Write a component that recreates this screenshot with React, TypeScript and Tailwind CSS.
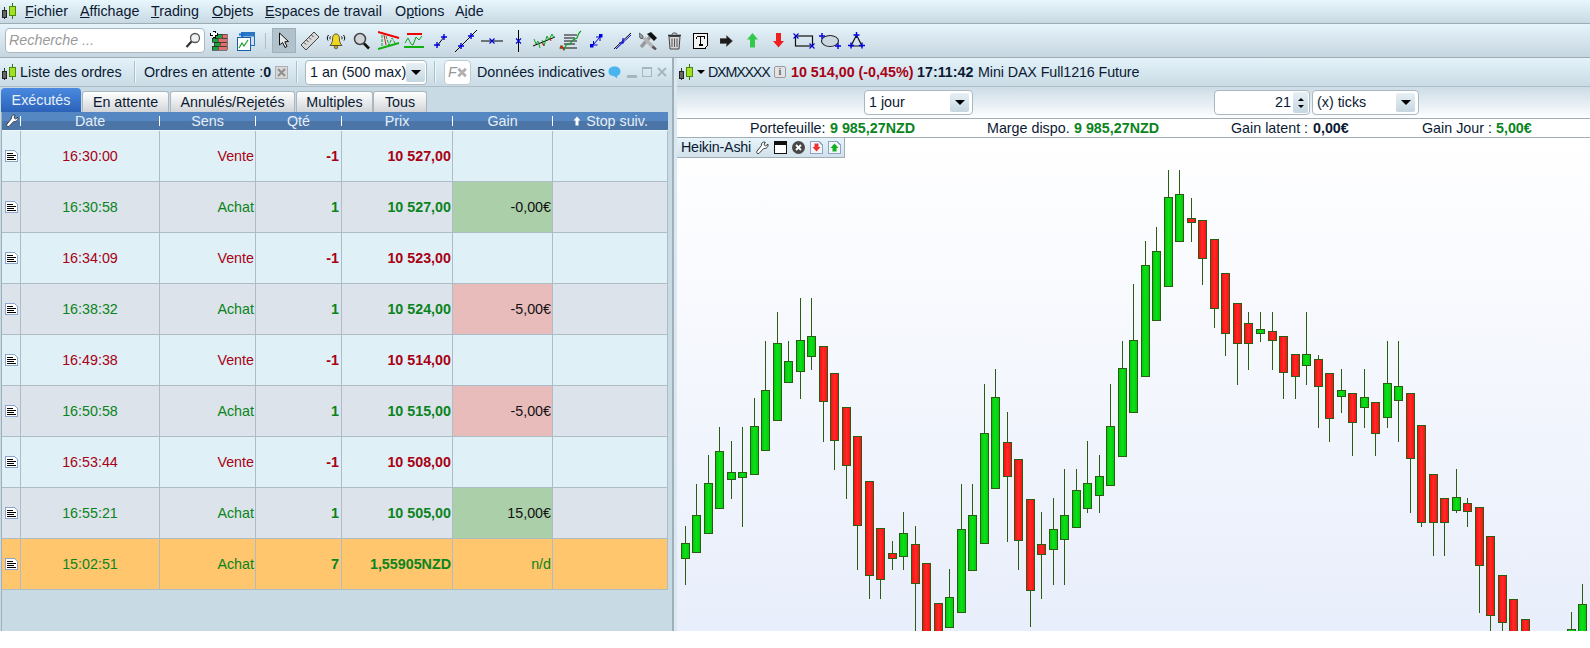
import React from "react";

type Candle = [number, number | null, number | null, number, number, "G" | "R"];

const LEFT: Candle[] = [
  [46,1185,1362,1240,1285,"G"],[79,1060,null,1156,1265,"G"],[115,972,null,1060,1210,"G"],[148,888,null,964,1135,"G"],
  [184,930,1104,1027,1048,"G"],[217,888,1188,1027,1040,"G"],[253,801,null,889,1033,"G"],[286,630,null,781,961,"G"],
  [322,543,null,640,871,"G"],[355,630,null,694,757,"G"],[391,501,804,631,724,"G"],[424,501,717,619,679,"G"],
  [460,null,933,649,814,"R"],[493,null,1017,730,931,"R"],[529,null,1104,832,1006,"R"],[562,null,1317,919,1186,"R"],
  [598,null,1404,1054,1336,"R"],[631,null,1404,1195,1348,"R"],[667,1230,1317,1270,1285,"R"],[700,1143,1317,1210,1279,"G"],
  [736,1185,1520,1243,1360,"R"],[769,null,null,1300,1520,"R"],[805,null,null,1420,1520,"R"],[838,1314,null,1402,1492,"G"],
  [874,1060,null,1198,1447,"G"],[907,1060,null,1156,1321,"G"],[943,759,null,910,1240,"G"],[976,714,null,802,1075,"G"],
  [1012,843,1233,937,1039,"R"],[1045,null,1317,988,1231,"R"],[1081,null,1488,1108,1381,"R"],[1114,1143,1404,1243,1273,"R"],
  [1150,1101,1362,1198,1258,"G"],[1183,1014,1362,1156,1228,"G"],[1219,1014,null,1081,1192,"G"],[1252,930,1146,1060,1135,"G"],
  [1288,972,1146,1039,1096,"G"],[1321,759,null,889,1066,"G"],[1357,630,null,715,979,"G"],
];
const RIGHT: Candle[] = [
  [10,459,null,631,847,"G"],[46,330,null,406,739,"G"],[79,288,null,364,571,"G"],[115,117,null,202,469,"G"],
  [148,117,null,193,334,"G"],[184,201,333,265,277,"R"],[217,null,462,271,385,"R"],[253,null,591,328,535,"R"],
  [286,null,675,430,610,"R"],[322,null,762,520,640,"R"],[355,543,717,580,640,"R"],[391,543,633,598,610,"G"],
  [427,543,717,604,631,"R"],[460,null,804,619,727,"R"],[496,null,804,673,739,"R"],[529,543,762,673,706,"G"],
  [565,672,891,688,769,"R"],[598,null,933,730,865,"R"],[634,714,846,781,799,"G"],[667,null,975,790,877,"R"],
  [703,714,891,802,832,"G"],[736,null,975,817,910,"R"],[772,630,891,760,862,"G"],[805,630,933,769,811,"G"],
  [841,null,1146,790,985,"R"],[874,null,1188,886,1177,"R"],[910,null,1275,1033,1177,"R"],[943,null,1275,1105,1177,"R"],
  [979,1014,1146,1102,1141,"G"],[1012,1101,1188,1120,1144,"R"],[1048,null,1446,1132,1306,"R"],[1081,null,1520,1219,1456,"R"],
  [1117,null,1520,1336,1477,"R"],[1150,null,null,1408,1520,"R"],[1186,null,null,1468,1520,"R"],[1324,1443,null,1498,1520,"G"],
  [1357,1359,null,1423,1520,"G"],
];

function CandleShape({ c, ox }: { c: Candle; ox: number }) {
  const cx = Math.floor(ox + c[0] / 3) - 677 + 0.5;
  const Y = (z: number) => Math.round(130 + z / 3) - 138 + 0.5;
  const top = Y(c[3]);
  const bot = Y(c[4]);
  return (
    <g>
      {c[1] !== null && <line x1={cx} x2={cx} y1={Y(c[1])} y2={top} stroke="#2a5c12" />}
      {c[2] !== null && <line x1={cx} x2={cx} y1={bot} y2={Y(c[2])} stroke="#2a5c12" />}
      <rect x={cx - 4} y={top} width={8} height={bot - top} fill={c[5] === "G" ? "url(#cg)" : "url(#cr)"} stroke="#2a5c12" />
    </g>
  );
}

function Logo() {
  return (
    <svg width="16" height="17" viewBox="0 0 16 17" className="shrink-0" shapeRendering="crispEdges">
      <line x1="3.5" y1="4" x2="3.5" y2="16" stroke="#333" />
      <rect x="1.5" y="7.5" width="4" height="7" fill="#666" stroke="#222" />
      <line x1="11.5" y1="0" x2="11.5" y2="16" stroke="#3a7010" />
      <rect x="8.5" y="3.5" width="6" height="9" fill="#a4e020" stroke="#4a8a10" />
    </svg>
  );
}

function Wrench({ className = "", fill = "#fff", stroke = "#333" }: { className?: string; fill?: string; stroke?: string }) {
  return (
    <svg width="13" height="14" viewBox="0 0 13 14" className={className}>
      <path d="M12 3.2 L9.6 5 L8 3.8 L9.2 1.2 C7 0.4 5 2 5.4 4.6 L0.8 10.4 C0 11.6 1.8 13.4 3 12.4 L7.8 7.4 C10.4 8 12.4 6 12 3.2Z" fill={fill} stroke={stroke} strokeWidth="0.9" />
    </svg>
  );
}

function Cross({ x, y, c = "#0000e0" }: { x: number; y: number; c?: string }) {
  return <path d={`M${x - 3} ${y}H${x + 3}M${x} ${y - 3}V${y + 3}`} stroke={c} strokeWidth="1.4" fill="none" />;
}
function XMark({ x, y }: { x: number; y: number }) {
  return <path d={`M${x - 2.5} ${y - 2.5}L${x + 2.5} ${y + 2.5}M${x + 2.5} ${y - 2.5}L${x - 2.5} ${y + 2.5}`} stroke="#0000e0" strokeWidth="1.1" fill="none" />;
}

function DocIcon() {
  return (
    <svg width="13" height="12" viewBox="0 0 13 12" className="ml-[3px]" shapeRendering="crispEdges">
      <path d="M0.5 0.5H9.5L12.5 3.5V11.5H0.5Z" fill="#fff" stroke="#8aa4cc" />
      <path d="M2 3.5H8M2 5.5H11M2 7.5H9M2 9.5H11" stroke="#000" />
    </svg>
  );
}

const sep = "w-px h-[22px] bg-[#aebdc6] border-r border-[#f0f8fc] box-content shrink-0";

function DownTri() {
  return <span className="w-0 h-0 border-l-[5px] border-r-[5px] border-t-[5px] border-l-transparent border-r-transparent border-t-black" />;
}

function ArrowBtn() {
  return (
    <span className="w-[19px] h-[19px] flex items-center justify-center rounded-[2px] bg-linear-to-b from-[#e6f0f5] to-[#c6d7e1] shrink-0">
      <DownTri />
    </span>
  );
}

const GRID = "grid grid-cols-[19px_139px_96px_86px_111px_100px_115px]";
const RED = "text-[#a80014]";
const GREEN = "text-[#0a8420]";

type Row = { t: string; s: string; q: string; p: string; g?: string; gc?: string; up: boolean; bg: string };
const A = "bg-[#e0f0f7]";
const B = "bg-[#dce3ea]";
const ROWS: Row[] = [
  { t: "16:30:00", s: "Vente", q: "-1", p: "10 527,00", up: false, bg: A },
  { t: "16:30:58", s: "Achat", q: "1", p: "10 527,00", g: "-0,00€", gc: "bg-[#abd0a9]", up: true, bg: B },
  { t: "16:34:09", s: "Vente", q: "-1", p: "10 523,00", up: false, bg: A },
  { t: "16:38:32", s: "Achat", q: "1", p: "10 524,00", g: "-5,00€", gc: "bg-[#e9bcbc]", up: true, bg: B },
  { t: "16:49:38", s: "Vente", q: "-1", p: "10 514,00", up: false, bg: A },
  { t: "16:50:58", s: "Achat", q: "1", p: "10 515,00", g: "-5,00€", gc: "bg-[#e9bcbc]", up: true, bg: B },
  { t: "16:53:44", s: "Vente", q: "-1", p: "10 508,00", up: false, bg: A },
  { t: "16:55:21", s: "Achat", q: "1", p: "10 505,00", g: "15,00€", gc: "bg-[#abd0a9]", up: true, bg: B },
];

const cellBase = "flex items-center border-r border-b border-[#aebcc6]";

function OrderRow({ r }: { r: Row }) {
  const c = r.up ? GREEN : RED;
  return (
    <div className={`${GRID} h-[51px] ${r.bg}`}>
      <div className={cellBase}><DocIcon /></div>
      <div className={`${cellBase} justify-center ${c}`}>{r.t}</div>
      <div className={`${cellBase} justify-end pr-px ${c}`}>{r.s}</div>
      <div className={`${cellBase} justify-end pr-[2px] font-bold ${c}`}>{r.q}</div>
      <div className={`${cellBase} justify-end pr-px font-bold ${c}`}>{r.p}</div>
      <div className={`${cellBase} justify-end pr-px ${r.gc ?? ""} ${r.g === "n/d" ? c : "text-[#111]"}`}>{r.g}</div>
      <div className={cellBase} />
    </div>
  );
}

function HeadCell({ children, tick = true }: { children?: React.ReactNode; tick?: boolean }) {
  return (
    <div className="flex items-center">
      <span className="flex-1 flex items-center justify-center gap-[5px]">{children}</span>
      {tick && <span className="w-px h-[10px] bg-white shrink-0" />}
    </div>
  );
}

function Tab({ label, className }: { label: string; className: string }) {
  return (
    <div className={`h-[21px] flex items-center justify-center rounded-t-[3px] border border-b-0 border-[#aab7bf] bg-linear-to-b from-white to-[#d2d5d8] text-[#0b1a33] ${className}`}>
      {label}
    </div>
  );
}

function Select({ label, className }: { label: string; className: string }) {
  return (
    <div className={`h-[25px] shrink-0 flex items-center justify-between pl-[4px] pr-[3px] bg-white rounded-[4px] border border-[#a9b8c2] ${className}`}>
      <span>{label}</span>
      <ArrowBtn />
    </div>
  );
}

function Menu({ u, pre = "", rest, className }: { u: string; pre?: string; rest: string; className: string }) {
  return (
    <span className={className}>
      {pre}<span className="underline">{u}</span>{rest}
    </span>
  );
}

function Toolbar() {
  return (
    <div className="h-[34px] flex items-center pl-[5px] border-b border-[#9dabb3] bg-linear-to-b from-[#e6f4fb] to-[#c6d6e0]">
      <div className="w-[200px] h-[25px] flex items-center justify-between pl-[3px] pr-[3px] bg-white rounded-[4px] border border-[#a9b8c2] italic text-[#9a9a9a]">
        <span>Recherche ...</span>
        <svg width="16" height="17" viewBox="0 0 16 17">
          <circle cx="10" cy="6" r="4.5" fill="#eef2f4" stroke="#555" strokeWidth="1.3" />
          <path d="M6.5 9.5L1.5 15" stroke="#333" strokeWidth="2.2" />
        </svg>
      </div>
      {/* bricks */}
      <svg width="18" height="20" viewBox="0 0 18 20" className="ml-[5px]" shapeRendering="crispEdges">
        <path d="M5 3h7v4h-7zM2 7h6v4h-6zM2 15h6v4h-6zM4 11h6v4h-6z" fill="#1fa040" stroke="#222" strokeWidth="0.6" />
        <path d="M12 3h5v4h-5zM8 7h9v4h-9zM10 11h7v4h-7zM8 15h9v4h-9z" fill="#e0706c" stroke="#333" strokeWidth="0.6" />
        <path d="M0 3h8M4 0v7" stroke="#000" strokeWidth="3" />
        <path d="M1 3h6M4 1v5" stroke="#fff" strokeWidth="1.4" />
      </svg>
      {/* chart window */}
      <svg width="19" height="20" viewBox="0 0 19 20" className="ml-[8px]">
        <rect x="6.5" y="1.5" width="12" height="13" fill="#cfe0f2" stroke="#2a6cb0" />
        <rect x="6.5" y="1.5" width="12" height="4" fill="#2a78c8" />
        <rect x="1.5" y="6.5" width="13" height="13" fill="#fff" stroke="#1a60a8" />
        <path d="M3 17L6 12L8 15L12 9" fill="none" stroke="#10a020" strokeWidth="1.2" />
        <path d="M3 3.5h6M6 1v5" stroke="#1a70d0" strokeWidth="2" />
      </svg>
      <span className="ml-[10px] w-px h-[16px] bg-[#aebdc6]" />
      <div className="ml-[6px] w-[24px] h-[25px] flex items-center justify-center bg-[#b2c2cc] border border-[#a0b0ba]">
        <svg width="12" height="17" viewBox="0 0 12 17">
          <path d="M1.5 1L1.5 13L4.5 10.5L7 15.5L9 14.5L6.8 9.8L10.5 9.5Z" fill="#e8e8e8" stroke="#111" strokeWidth="1" />
        </svg>
      </div>
      {/* ruler */}
      <svg width="20" height="20" viewBox="0 0 20 20" className="ml-[4px]">
        <path d="M1 14L14 1L19 6L6 19Z" fill="#d8d8d8" stroke="#444" />
        <path d="M4 11.5L6 13.5M6.5 9L8.5 11M9 6.5L11 8.5M11.5 4L13.5 6" stroke="#444" />
      </svg>
      {/* bell */}
      <svg width="20" height="18" viewBox="0 0 20 18" className="ml-[6px]">
        <path d="M10 2C7 2 6.5 5 6.5 8C6.5 10 5.5 12 4 13.5H16C14.5 12 13.5 10 13.5 8C13.5 5 13 2 10 2Z" fill="#f2d81a" stroke="#444" strokeWidth="0.9" />
        <circle cx="10" cy="15" r="1.8" fill="#c8a000" stroke="#333" strokeWidth="0.6" />
        <path d="M2.5 3C1 5 1 7 2 8.5M4.5 4.5C3.8 5.5 3.8 6.5 4.2 7.2M17.5 3C19 5 19 7 18 8.5M15.5 4.5C16.2 5.5 16.2 6.5 15.8 7.2" stroke="#000" fill="none" strokeWidth="1" />
      </svg>
      {/* magnifier */}
      <svg width="17" height="18" viewBox="0 0 17 18" className="ml-[7px]">
        <circle cx="7" cy="7" r="5.5" fill="#d0d4d8" stroke="#444" strokeWidth="1.5" />
        <path d="M11 11.5L16 16.5" stroke="#111" strokeWidth="2.6" />
      </svg>
      {/* triangle pattern */}
      <svg width="22" height="20" viewBox="0 0 22 20" className="ml-[8px]">
        <path d="M0 1L21 7" stroke="#f00000" strokeWidth="2" />
        <path d="M0 18L21 12" stroke="#10b010" strokeWidth="2" />
        <path d="M4 4V16M8 5L11 14L14 7L17 12" fill="none" stroke="#10a020" strokeWidth="1" strokeDasharray="3 1" />
        <path d="M6 4L8 14" stroke="#d02020" strokeWidth="1" />
      </svg>
      {/* channel */}
      <svg width="20" height="20" viewBox="0 0 20 20" className="ml-[4px]" >
        <path d="M3 3H18" stroke="#f00000" strokeWidth="2" />
        <path d="M0 16H20" stroke="#10b010" strokeWidth="2" />
        <path d="M1 12L4 7L7 13L9 14L12 6L15 9L18 5" fill="none" stroke="#10a020" strokeWidth="1" />
      </svg>
      {/* short line */}
      <svg width="13" height="16" viewBox="0 0 13 16" className="ml-[10px]">
        <path d="M3 13L10 4" stroke="#000" />
        <Cross x={3} y={12} />
        <Cross x={10} y={4} />
      </svg>
      {/* long line */}
      <svg width="22" height="22" viewBox="0 0 22 22" className="ml-[8px]">
        <path d="M0 22L22 0" stroke="#000" />
        <Cross x={6} y={16} />
        <Cross x={16} y={6} />
      </svg>
      {/* hline */}
      <svg width="22" height="10" viewBox="0 0 22 10" className="ml-[4px]">
        <path d="M0 5H22" stroke="#000" />
        <XMark x={11} y={5} />
      </svg>
      {/* vline */}
      <svg width="7" height="22" viewBox="0 0 7 22" className="ml-[12px]">
        <path d="M3.5 0V22" stroke="#000" />
        <XMark x={3.5} y={11} />
      </svg>
      {/* zigzag */}
      <svg width="22" height="20" viewBox="0 0 22 20" className="ml-[11px]">
        <path d="M0 15L22 6" stroke="#000" />
        <path d="M1 8L3 13L5 10L7 17M9 9L11 15L14 5L16 9L19 3L21 7" fill="none" stroke="#10a020" />
        <path d="M9 12L11 15M17 7L18 10" stroke="#e01010" />
      </svg>
      <svg width="23" height="22" viewBox="0 0 23 22" className="ml-[4px]">
        <path d="M5 5H18M5 8H16M5 11H18M5 14H16M2 18H18" stroke="#111" />
        <path d="M1 19L2 16L5 20L7 15L11 14L14 10L18 8L20 3L22 1" fill="none" stroke="#10a020" strokeWidth="1.2" />
        <path d="M1 18L3 16L5 20" fill="none" stroke="#e01010" strokeWidth="1.2" />
      </svg>
      {/* blue double arrow */}
      <svg width="13" height="14" viewBox="0 0 13 14" className="ml-[8px]">
        <rect x="0" y="10" width="3.5" height="3.5" fill="#0000e0" />
        <rect x="9" y="0" width="3.5" height="3.5" fill="#0000e0" />
        <path d="M3 11L10 3M3.5 7V11H7.5M6 3H10V7" fill="none" stroke="#0000e0" strokeWidth="1" />
      </svg>
      {/* cross line */}
      <svg width="17" height="18" viewBox="0 0 17 18" className="ml-[11px]">
        <path d="M0 17L17 1" stroke="#000" />
        <path d="M2 17L17 3" stroke="#0000e0" />
        <path d="M9 6V11H5" fill="none" stroke="#0000e0" strokeWidth="1.2" />
      </svg>
      {/* tools */}
      <svg width="18" height="18" viewBox="0 0 18 18" className="ml-[8px]">
        <path d="M2 15L11 5" stroke="#9a9a9a" strokeWidth="3.4" />
        <path d="M15 16L5 6" stroke="#b4b4b4" strokeWidth="3.4" />
        <path d="M8 2L15 9L18 6L12 0Z" fill="#111" />
        <path d="M0.5 1L4 4V6.5L1.5 6.5L0 4Z" fill="#999" stroke="#444" strokeWidth="0.7" />
        <path d="M13.5 14.5L17 17.5" stroke="#555" strokeWidth="2.4" />
      </svg>
      {/* trash */}
      <svg width="15" height="18" viewBox="0 0 15 18" className="ml-[10px]">
        <path d="M1 3.5H14" stroke="#333" strokeWidth="1.6" />
        <path d="M5 2.5C5 0.5 10 0.5 10 2.5" fill="none" stroke="#333" />
        <path d="M2 4.5L3 17H12L13 4.5Z" fill="#d6d6d6" stroke="#444" />
        <path d="M5 6.5V15M7.5 6.5V15M10 6.5V15" stroke="#555" />
      </svg>
      {/* T */}
      <svg width="15" height="16" viewBox="0 0 15 16" className="ml-[11px]" shapeRendering="crispEdges">
        <path d="M0.5 0.5H14.5V12L12 15.5H0.5Z" fill="#f2f2f2" stroke="#000" />
        <path d="M3.5 3.5H11.5V6M7.5 3.5V12M5.5 12H9.5M3.5 3.5V6" fill="none" stroke="#000" strokeWidth="1.6" />
      </svg>
      {/* black arrow */}
      <svg width="13" height="12" viewBox="0 0 13 12" className="ml-[12px]">
        <path d="M0 3.5H6.5V0.5L12.5 6L6.5 11.5V8.5H0Z" fill="#1c1c1c" stroke="#555" strokeWidth="0.5" />
      </svg>
      {/* up */}
      <svg width="11" height="15" viewBox="0 0 11 15" className="ml-[14px]">
        <path d="M5.5 0L11 6.5H8V14.5H3V6.5H0Z" fill="#32c848" />
      </svg>
      {/* down */}
      <svg width="11" height="15" viewBox="0 0 11 15" className="ml-[15px]">
        <path d="M3 0H8V8H11L5.5 14.5L0 8H3Z" fill="#f02020" />
      </svg>
      {/* rect */}
      <svg width="22" height="16" viewBox="0 0 22 16" className="ml-[9px]">
        <rect x="2.5" y="3" width="17" height="10" fill="none" stroke="#111" strokeWidth="1.2" />
        <XMark x={3} y={3} />
        <XMark x={19} y={13} />
      </svg>
      {/* ellipse */}
      <svg width="22" height="16" viewBox="0 0 22 16" className="ml-[4px]">
        <ellipse cx="11" cy="8" rx="8.5" ry="5.5" fill="#ccd8e0" stroke="#222" strokeWidth="1.1" />
        <Cross x={3} y={3} />
        <Cross x={19} y={13} />
      </svg>
      {/* triangle */}
      <svg width="17" height="17" viewBox="0 0 17 17" className="ml-[7px]">
        <path d="M8.5 3L3 14H14Z" fill="none" stroke="#111" strokeWidth="1.2" />
        <Cross x={8.5} y={3} />
        <Cross x={3} y={13.5} />
        <Cross x={14} y={13.5} />
      </svg>
    </div>
  );
}

function LeftPanel() {
  return (
    <div className="w-[672px] h-[573px] flex flex-col shrink-0">
      <div className="h-[29px] flex items-center border-b border-[#b0bdc5] bg-linear-to-b from-[#e4f3fa] to-[#cadbe5] text-[#0b1a33]">
        <span className="ml-px"><Logo /></span>
        <span className="ml-[3px] w-[114px]">Liste des ordres</span>
        <span className={sep} />
        <span className="ml-[8px] w-[131px]">Ordres en attente :<b>0</b></span>
        <svg width="13" height="13" viewBox="0 0 13 13" className="shrink-0" shapeRendering="crispEdges">
          <rect x="0.5" y="0.5" width="12" height="12" fill="#d8d8d8" stroke="#b0b0b0" />
          <path d="M3 3L10 10M10 3L3 10" stroke="#8e8e8e" strokeWidth="2" shapeRendering="auto" />
        </svg>
        <span className={`ml-[8px] ${sep}`} />
        <Select label="1 an (500 max)" className="ml-[7px] w-[122px]" />
        <span className={`ml-[7px] ${sep}`} />
        <div className="ml-[8px] w-[27px] h-[25px] shrink-0 flex items-center justify-between px-[3px] bg-white rounded-[4px] border border-[#c0ccd4] text-[#999] italic">
          <span>F</span>
          <svg width="11" height="11" viewBox="0 0 11 11"><path d="M1.5 1.5L9.5 9.5M9.5 1.5L1.5 9.5" stroke="#b0b0b0" strokeWidth="3" /></svg>
        </div>
        <span className="ml-[6px] w-[126px]">Données indicatives</span>
        <svg width="13" height="13" viewBox="0 0 13 13" className="ml-[5px] shrink-0">
          <path d="M6.5 0.5C10 0.5 12.5 2.5 12.5 5.5C12.5 8 10.5 9.5 9 10L9.5 12.5L6 10.2C3 10.2 0.5 8.5 0.5 5.5C0.5 2.5 3 0.5 6.5 0.5Z" fill="#4ab4ee" />
        </svg>
        <span className="ml-[6px] w-[10px] h-[3px] mt-[9px] bg-[#a8b6be]" />
        <span className="ml-[5px] w-[10px] h-[10px] border border-[#a8b6be] border-t-2" />
        <svg width="10" height="10" viewBox="0 0 10 10" className="ml-[5px] shrink-0">
          <path d="M1 1L9 9M9 1L1 9" stroke="#a8b6be" strokeWidth="2" />
        </svg>
      </div>
      <div className="flex-1 min-h-0 flex flex-col bg-[#c8dae3] pl-px">
        <div className="h-[25px] flex items-end gap-px">
          <div className="w-[80px] h-[24px] flex items-center justify-center rounded-t-[4px] bg-linear-to-b from-[#4a8ae0] to-[#2a62b8] text-[#e8f0fa]">Exécutés</div>
          <Tab label="En attente" className="w-[87px]" />
          <Tab label="Annulés/Rejetés" className="w-[125px]" />
          <Tab label="Multiples" className="w-[77px]" />
          <Tab label="Tous" className="w-[54px] -ml-px" />
        </div>
        <div className="w-[667px] flex-1 min-h-0 border-l border-[#9fb0ba]">
          <div className={`${GRID} h-[19px] border-b border-[#eef6fa] bg-linear-to-b from-[#5588c2] from-50% to-[#4b75a6] to-50% text-[#e6eef8]`}>
            <HeadCell><Wrench className="ml-[3px]" /></HeadCell>
            <HeadCell>Date</HeadCell>
            <HeadCell>Sens</HeadCell>
            <HeadCell>Qté</HeadCell>
            <HeadCell>Prix</HeadCell>
            <HeadCell>Gain</HeadCell>
            <HeadCell tick={false}>
              <svg width="8" height="10" viewBox="0 0 8 10"><path d="M4 0.5L7.5 4.5H5.5V9.5H2.5V4.5H0.5Z" fill="#fff" /></svg>
              Stop suiv.
            </HeadCell>
          </div>
          {ROWS.map((r) => <OrderRow key={r.t} r={r} />)}
          <OrderRow r={{ t: "15:02:51", s: "Achat", q: "7", p: "1,55905NZD", g: "n/d", up: true, bg: "bg-[#ffc66e]" }} />
        </div>
      </div>
    </div>
  );
}

function MiniDoc({ up }: { up: boolean }) {
  return (
    <svg width="13" height="13" viewBox="0 0 13 13" shapeRendering="crispEdges">
      <path d="M0.5 0.5H9L12.5 4V12.5H0.5Z" fill="#f4f6f8" stroke="#8aa4cc" />
      {up
        ? <path d="M6.5 2.5L10.5 7H8.5V10.5H4.5V7H2.5Z" fill="#10b020" shapeRendering="auto" />
        : <path d="M4.5 2.5H8.5V6H10.5L6.5 10.5L2.5 6H4.5Z" fill="#f03030" shapeRendering="auto" />}
    </svg>
  );
}

function RightPanel() {
  return (
    <div className="flex-1 min-w-0 h-[573px] flex flex-col">
      <div className="h-[29px] flex items-center border-b border-[#b0bdc5] bg-linear-to-b from-[#e4f3fa] to-[#cadbe5] text-[#0b1a33]">
        <span className="ml-px"><Logo /></span>
        <span className="ml-[3px] w-0 h-0 border-l-[4px] border-r-[4px] border-t-[4px] border-l-transparent border-r-transparent border-t-black" />
        <span className="ml-[3px] w-[66px] tracking-[-1.2px]">DXMXXXX</span>
        <span className="w-[12px] h-[12px] flex items-center justify-center rounded-[2px] bg-[#e4e4e4] border border-[#9a9a9a] font-['Liberation_Serif',serif] font-bold text-[10px] text-[#666]">i</span>
        <b className={`ml-[5px] w-[126px] ${RED}`}>10 514,00 (-0,45%)</b>
        <b className="w-[61px]">17:11:42</b>
        <span className="tracking-[-0.1px]">Mini DAX Full1216 Future</span>
      </div>
      <div className="h-[32px] flex items-center border-b border-[#a0aeb8] bg-linear-to-b from-[#cddce6] to-[#fdfeff] text-[#0b1a33]">
        <Select label="1 jour" className="ml-[187px] w-[109px]" />
        <div className="ml-[241px] w-[96px] h-[25px] flex items-center justify-end bg-white rounded-[4px] border border-[#a9b8c2] pr-px">
          <span className="mr-[2px]">21</span>
          <span className="w-[15px] h-[21px] flex flex-col items-center justify-center gap-[4px] rounded-[2px] bg-linear-to-b from-[#e6f0f5] to-[#c6d7e1]">
            <span className="w-0 h-0 border-l-[3px] border-r-[3px] border-b-[3px] border-l-transparent border-r-transparent border-b-black" />
            <span className="w-0 h-0 border-l-[3px] border-r-[3px] border-t-[3px] border-l-transparent border-r-transparent border-t-black" />
          </span>
        </div>
        <Select label="(x) ticks" className="ml-[2px] w-[107px]" />
      </div>
      <div className="h-[19px] flex items-center border-b border-[#a0aeb8] bg-white text-[#0b1a33]">
        <span className="ml-[73px] w-[80px]">Portefeuille:</span>
        <b className={`w-[157px] ${GREEN}`}>9 985,27NZD</b>
        <span className="w-[87px]">Marge dispo.</span>
        <b className={`w-[157px] ${GREEN}`}>9 985,27NZD</b>
        <span className="w-[82px]">Gain latent :</span>
        <b className="w-[109px]">0,00€</b>
        <span className="w-[74px]">Gain Jour :</span>
        <b className={GREEN}>5,00€</b>
      </div>
      <div className="relative flex-1 min-h-0 bg-linear-to-b from-white to-[#e8eefb] overflow-hidden">
        <svg width="913" height="493" viewBox="0 0 913 493" className="block" shapeRendering="crispEdges">
          <defs>
            <linearGradient id="cg" x1="0" x2="1" y1="0" y2="0">
              <stop offset="0" stopColor="#04c40a" />
              <stop offset="0.5" stopColor="#0ce018" />
              <stop offset="1" stopColor="#02c808" />
            </linearGradient>
            <linearGradient id="cr" x1="0" x2="1" y1="0" y2="0">
              <stop offset="0" stopColor="#f80c0c" />
              <stop offset="0.5" stopColor="#ff2a2a" />
              <stop offset="1" stopColor="#fa0e0e" />
            </linearGradient>
          </defs>
          {LEFT.map((c) => <CandleShape key={`l${c[0]}`} c={c} ox={670} />)}
          {RIGHT.map((c) => <CandleShape key={`r${c[0]}`} c={c} ox={1130} />)}
        </svg>
        <div className="absolute left-0 top-0 w-[168px] h-[20px] flex items-center border-r border-b border-[#9fadb6] bg-linear-to-b from-[#e8f4fa] to-[#d2e1ea] text-[#0b1a33]">
          <span className="ml-[4px] w-[70px] tracking-[-0.2px]">Heikin-Ashi</span>
          <Wrench className="ml-[5px] shrink-0" fill="#fff" stroke="#222" />
          <svg width="13" height="13" viewBox="0 0 13 13" className="ml-[5px] shrink-0" shapeRendering="crispEdges">
            <rect x="0.5" y="0.5" width="12" height="12" rx="1" fill="#fff" stroke="#111" />
            <rect x="1" y="1" width="11" height="3" fill="#111" />
          </svg>
          <svg width="13" height="13" viewBox="0 0 13 13" className="ml-[5px] shrink-0">
            <circle cx="6.5" cy="6.5" r="6.5" fill="#484848" />
            <path d="M4 4L9 9M9 4L4 9" stroke="#fff" strokeWidth="1.8" />
          </svg>
          <span className="ml-[5px] flex"><MiniDoc up={false} /></span>
          <span className="ml-[5px] flex"><MiniDoc up={true} /></span>
        </div>
      </div>
    </div>
  );
}

export default function App() {
  return (
    <div className="w-[1590px] h-[631px] overflow-hidden bg-white font-['Liberation_Sans',Arial,sans-serif] text-[14.3px] leading-none whitespace-nowrap">
      <div className="h-[24px] flex items-center border-b border-[#9dabb3] bg-linear-to-b from-[#e8f7fd] to-[#c9d9e3] text-[#0b1a33]">
        <span className="ml-px"><Logo /></span>
        <Menu u="F" rest="ichier" className="ml-[8px] w-[55px]" />
        <Menu u="A" rest="ffichage" className="w-[71px]" />
        <Menu u="T" rest="rading" className="w-[61px]" />
        <Menu u="O" rest="bjets" className="w-[53px]" />
        <Menu u="E" rest="spaces de travail" className="w-[130px]" />
        <Menu pre="O" u="p" rest="tions" className="w-[60px]" />
        <Menu pre="A" u="i" rest="de" className="" />
      </div>
      <Toolbar />
      <div className="flex">
        <LeftPanel />
        <div className="w-[5px] h-[573px] flex shrink-0">
          <span className="w-[2px] bg-[#9fb0ba]" />
          <span className="w-[3px] bg-[#dbe8ef]" />
        </div>
        <RightPanel />
      </div>
    </div>
  );
}
